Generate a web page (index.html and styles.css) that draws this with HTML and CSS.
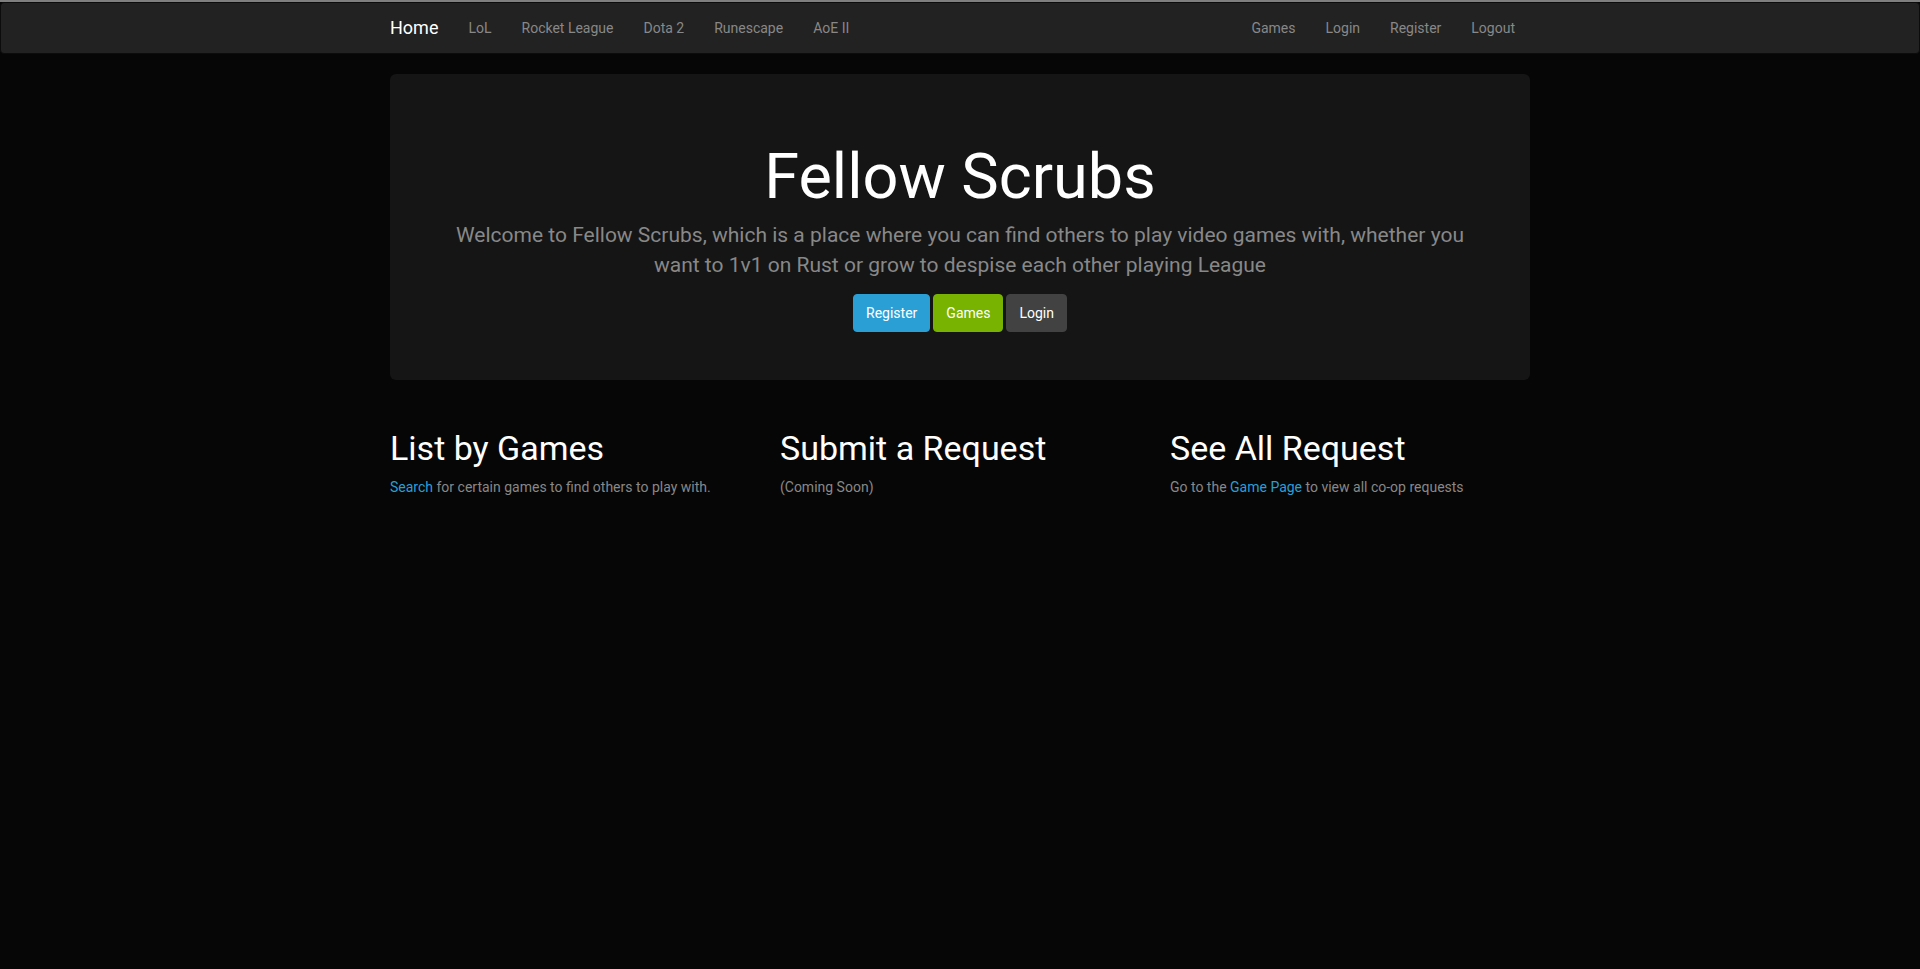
FILE: index.html
```html
<!DOCTYPE html>
<html lang="en">
<head>
<meta charset="utf-8">
<title>Fellow Scrubs</title>
<link rel="stylesheet" href="styles.css">
</head>
<body>
<div class="topline"></div>
<nav class="navbar">
  <div class="container nav-inner">
    <a class="brand" href="#">Home</a>
    <ul class="nav">
      <li><a href="#">LoL</a></li>
      <li><a href="#">Rocket League</a></li>
      <li><a href="#">Dota 2</a></li>
      <li><a href="#">Runescape</a></li>
      <li><a href="#">AoE II</a></li>
    </ul>
    <ul class="nav nav-right">
      <li><a href="#">Games</a></li>
      <li><a href="#">Login</a></li>
      <li><a href="#">Register</a></li>
      <li><a href="#">Logout</a></li>
    </ul>
  </div>
</nav>
<div class="container">
  <div class="jumbotron">
    <h1>Fellow Scrubs</h1>
    <p>Welcome to Fellow Scrubs, which is a place where you can find others to play video games with, whether you want to 1v1 on Rust or grow to despise each other playing League</p>
    <p class="actions"><a class="btn btn-primary" href="#">Register</a><a class="btn btn-success" href="#">Games</a><a class="btn btn-default" href="#">Login</a></p>
  </div>
  <div class="row">
    <div class="col">
      <h3>List by Games</h3>
      <p><a href="#">Search</a> for certain games to find others to play with.</p>
    </div>
    <div class="col">
      <h3>Submit a Request</h3>
      <p>(Coming Soon)</p>
    </div>
    <div class="col">
      <h3>See All Request</h3>
      <p>Go to the <a href="#">Game Page</a> to view all co-op requests</p>
    </div>
  </div>
</div>
</body>
</html>
```
FILE: styles.css
```css
* { box-sizing: border-box; }
html, body { margin: 0; padding: 0; }
body {
  background: #060606;
  color: #888;
  font-family: Roboto, "Liberation Sans", Arial, sans-serif;
  font-size: 14px;
  line-height: 1.428571;
}
a { color: #2a9fd6; text-decoration: none; }

.topline { height: 2px; background: #7f7f7f; }

.navbar {
  background: #222;
  border: 1px solid #0c0c0c;
  border-radius: 4px;
  min-height: 52px;
  margin-bottom: 20px;
}
.container {
  width: 1170px;
  margin: 0 auto;
  padding: 0 15px;
}
.nav-inner { display: flex; align-items: center; }
.brand {
  margin-left: -15px;
  padding: 15px;
  font-size: 18px;
  line-height: 20px;
  color: #fff;
}
.nav {
  display: flex;
  list-style: none;
  margin: 0;
  padding: 0;
}
.nav a {
  display: block;
  padding: 15px;
  line-height: 20px;
  color: #888;
}
.nav-right { margin-left: auto; }

.jumbotron {
  background: #151515;
  border-radius: 6px;
  padding: 48px 60px;
  margin-bottom: 30px;
  text-align: center;
}
.jumbotron h1 {
  margin: 20px 0 10px;
  font-size: 63px;
  line-height: 1.1;
  font-weight: 400;
  color: #fff;
}
.jumbotron p {
  margin: 0 0 13px;
  font-size: 21px;
  font-weight: 400;
  line-height: 1.428571;
}
.jumbotron p.actions {
  display: flex;
  justify-content: center;
  gap: 3px;
  margin-bottom: 0;
}

.btn {
  display: inline-block;
  padding: 8px 12px;
  font-size: 14px;
  line-height: 20px;
  border: 1px solid transparent;
  border-radius: 4px;
  color: #fff;
  font-weight: 400;
}
.btn-primary { background: #2a9fd6; border-color: #2a9fd6; }
.btn-success { background: #77b300; border-color: #77b300; }
.btn-default { background: #424242; border-color: #424242; }

.row { display: flex; margin: 0 -15px; }
.col { width: 33.3333%; padding: 0 15px; }
.col h3 {
  margin: 20px 0 10px;
  font-size: 34px;
  line-height: 1.1;
  font-weight: 400;
  color: #fff;
}
.col p { margin: 0 0 10px; }
```
